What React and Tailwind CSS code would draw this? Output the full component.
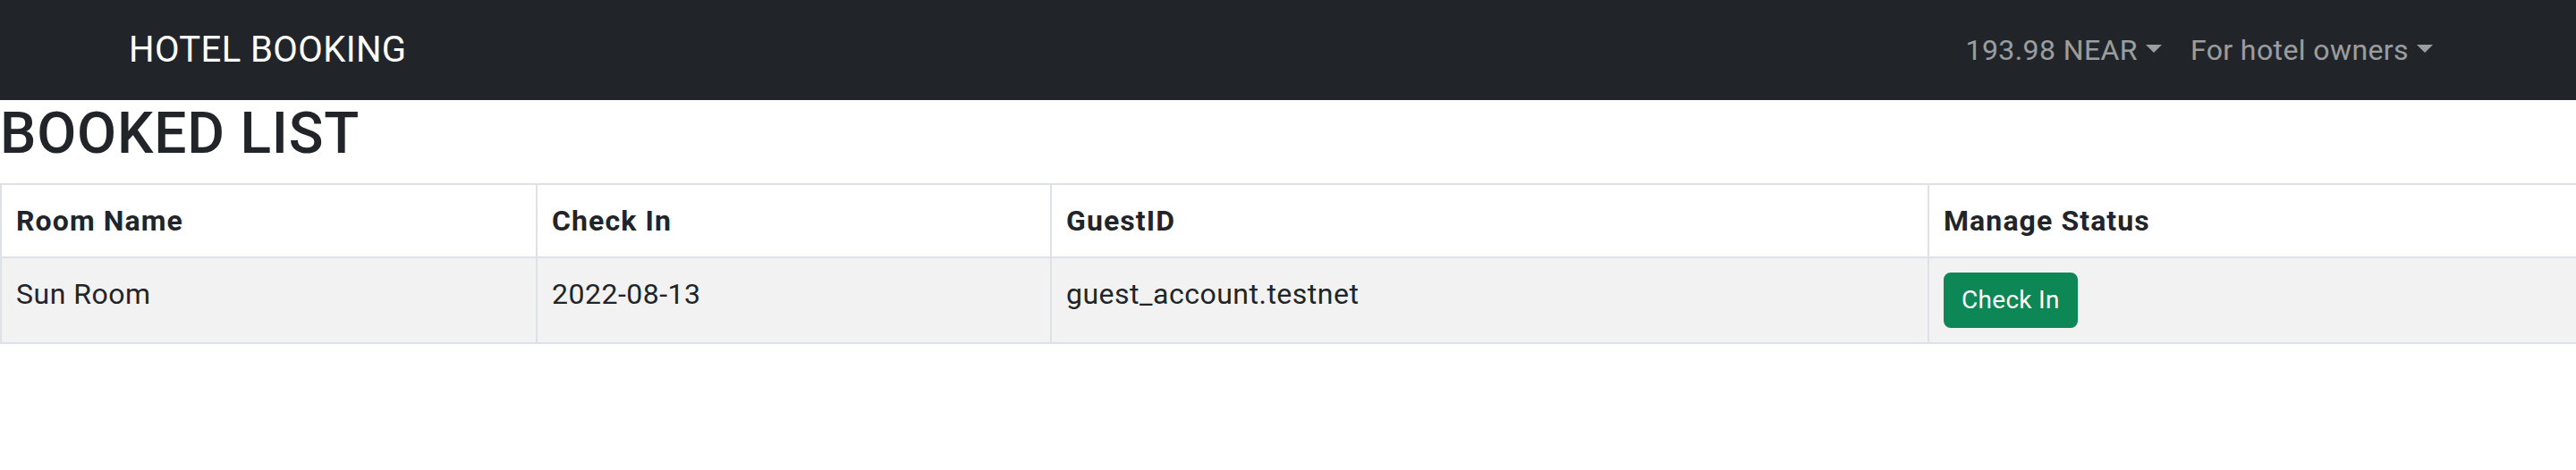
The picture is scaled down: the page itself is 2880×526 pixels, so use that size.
import React from 'react';

const bookings = [
  { roomName: 'Sun Room', checkIn: '2022-08-13', guestId: 'guest_account.testnet' },
];

function Caret() {
  return (
    <span className="ml-[9px] inline-block h-0 w-0 border-x-[9px] border-t-[9px] border-x-transparent border-t-current align-[0.255em]" />
  );
}

function NavDropdown({ label }) {
  return (
    <li>
      <a href="#" className="block px-[16px] py-[16px] text-[32px] leading-[48px] tracking-[0.4px] text-white/55">
        {label}
        <Caret />
      </a>
    </li>
  );
}

export default function App() {
  return (
    <div className="min-h-[526px] bg-white text-[#212529]" style={{ fontFamily: 'Roboto, "Liberation Sans", sans-serif' }}>
      <nav className="bg-[#212529] py-[16px]">
        <div className="mx-auto flex w-[2640px] items-center justify-between px-[24px]">
          <a href="#" className="py-[10px] text-[40px] leading-[60px] tracking-[0.4px] text-white">
            HOTEL BOOKING
          </a>
          <ul className="flex">
            <NavDropdown label="193.98 NEAR" />
            <NavDropdown label="For hotel owners" />
          </ul>
        </div>
      </nav>

      <h1 className="mb-[16px] text-[64px] font-medium leading-[1.2] tracking-[0.8px]">BOOKED LIST</h1>

      <table className="w-full table-fixed border-collapse text-[32px] leading-[48px]">
        <colgroup>
          <col className="w-[599px]" />
          <col className="w-[575px]" />
          <col className="w-[981px]" />
          <col className="w-[725px]" />
        </colgroup>
        <thead>
          <tr>
            {['Room Name', 'Check In', 'GuestID', 'Manage Status'].map((h) => (
              <th key={h} className="border-2 border-[#dee2e6] p-[16px] text-left font-bold tracking-[1.1px]">
                {h}
              </th>
            ))}
          </tr>
        </thead>
        <tbody>
          {bookings.map((b) => (
            <tr key={b.guestId} className="bg-[#f2f2f2] tracking-[0.5px]">
              <td className="border-2 border-[#dee2e6] p-[16px] align-top">{b.roomName}</td>
              <td className="border-2 border-[#dee2e6] p-[16px] align-top">{b.checkIn}</td>
              <td className="border-2 border-[#dee2e6] p-[16px] align-top">{b.guestId}</td>
              <td className="border-2 border-[#dee2e6] p-[16px] align-top">
                <button
                  type="button"
                  className="block rounded-[8px] border-2 border-[#0e8757] bg-[#0e8757] px-[18px] py-[8px] text-[28px] leading-[42px] tracking-[0.3px] text-white"
                >
                  Check In
                </button>
              </td>
            </tr>
          ))}
        </tbody>
      </table>
    </div>
  );
}
